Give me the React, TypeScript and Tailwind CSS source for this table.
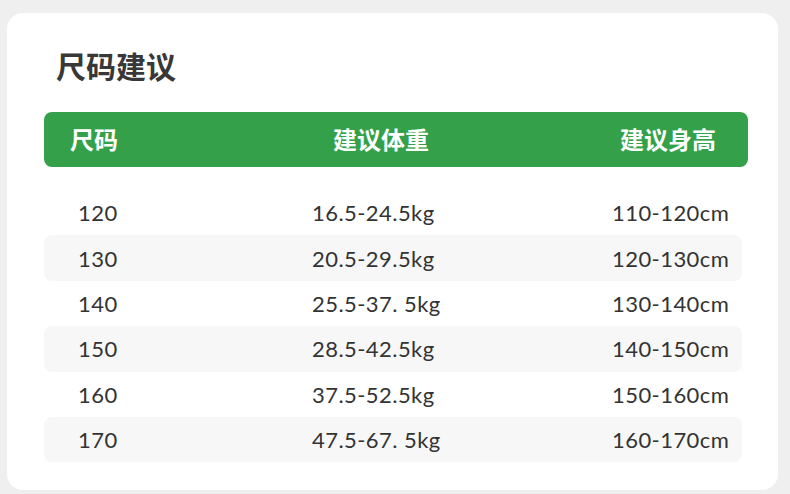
const rows = [
  { size: '120', weight: '16.5-24.5kg', height: '110-120cm' },
  { size: '130', weight: '20.5-29.5kg', height: '120-130cm' },
  { size: '140', weight: '25.5-37. 5kg', height: '130-140cm' },
  { size: '150', weight: '28.5-42.5kg', height: '140-150cm' },
  { size: '160', weight: '37.5-52.5kg', height: '150-160cm' },
  { size: '170', weight: '47.5-67. 5kg', height: '160-170cm' },
]

export default function App() {
  return (
    <div className="w-[790px] h-[494px] bg-[#efefef] pt-[13px] pl-[7px] font-['Noto_Sans','Noto_Sans_CJK_SC',sans-serif]">
      <div className="w-[771px] h-[477px] bg-white rounded-2xl pl-[37px] pt-[34px]">
        <h1 className="ml-[12px] text-[30px] leading-[40px] font-bold text-[#383838]">尺码建议</h1>
        <div className="mt-[25px] w-[704px] h-[55px] bg-[#34a14a] rounded-lg flex items-center pl-[26px] text-white text-[24px] font-bold">
          <div className="w-[263px]">尺码</div>
          <div className="w-[287px]">建议体重</div>
          <div>建议身高</div>
        </div>
        <div className="mt-[23px] text-[22px] tracking-[0.02em] text-[#333] font-['Lato',sans-serif]">
          {rows.map((r, i) => (
            <div
              key={r.size}
              className={`w-[698px] h-[45.4px] flex items-center pl-[34px] rounded-lg ${i % 2 === 1 ? 'bg-[#f7f7f7]' : ''}`}
            >
              <div className="w-[234px]">{r.size}</div>
              <div className="w-[300px]">{r.weight}</div>
              <div>{r.height}</div>
            </div>
          ))}
        </div>
      </div>
    </div>
  )
}
